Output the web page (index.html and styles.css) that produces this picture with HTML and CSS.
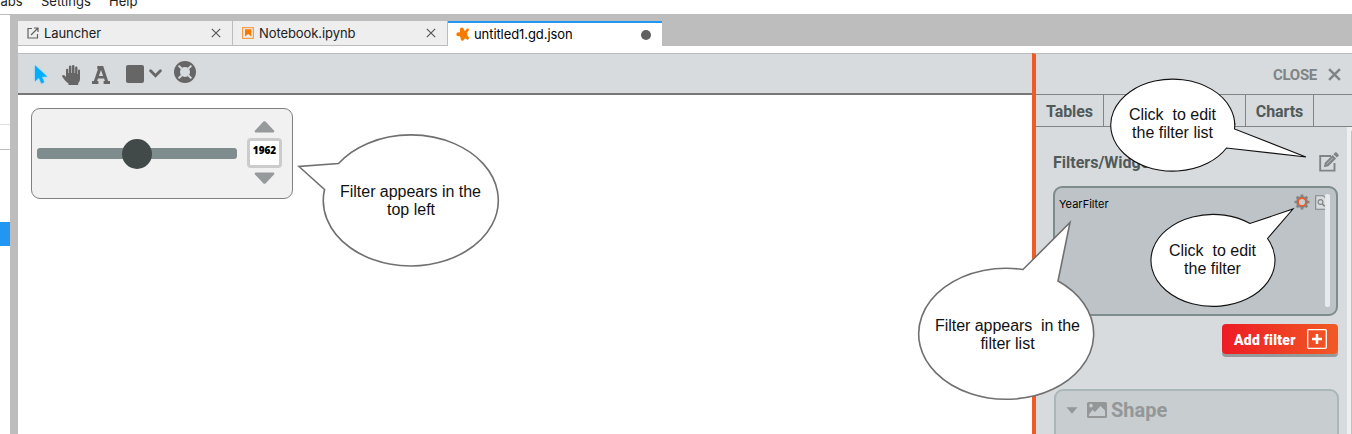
FILE: index.html
```html
<!DOCTYPE html>
<html lang="en">
<head>
<meta charset="utf-8">
<title>untitled1.gd.json</title>
<link rel="stylesheet" href="styles.css">
</head>
<body>
<div class="app">
  <nav class="menubar"><span class="menu-tabs">Tabs</span><span class="menu-settings">Settings</span><span>Help</span></nav>
  <div class="workspace">
    <aside class="rail"><div class="rail-a"></div><div class="rail-b"></div><div class="rail-c"></div><div class="rail-active"></div></aside>
    <main class="dock">
      <div class="doc-tabs">
        <div class="doc-tab">
          <svg class="doc-icon" viewBox="0 0 14 14"><path d="M6 2.500H2v9.500h9.500V8M8 2h4v4M12 2L5 9" fill="none" stroke="#616161" stroke-width="1.200"/></svg>
          <span class="doc-name">Launcher</span>
          <svg class="doc-close" viewBox="0 0 10 10"><path d="M.8.8l8.400 8.400M9.200.8L.8 9.200" stroke="#555" stroke-width="1.150"/></svg>
        </div>
        <div class="doc-tab">
          <svg class="doc-icon" viewBox="0 0 14 14"><rect x="1.600" y="1.600" width="10.800" height="10.800" fill="none" stroke="#f9a04a" stroke-width="1.200"/><path d="M4 3.300h6.400v7.200L7.200 8 4 10.500z" fill="#f57c00"/></svg>
          <span class="doc-name">Notebook.ipynb</span>
          <svg class="doc-close" viewBox="0 0 10 10"><path d="M.8.8l8.400 8.400M9.200.8L.8 9.200" stroke="#555" stroke-width="1.150"/></svg>
        </div>
        <div class="doc-tab current">
          <svg class="doc-icon" viewBox="0 0 14 14"><path d="M3.800 2.800Q4 .5 6 .5q1.800 0 2 2.300l.6 1q.8 0 1.600-1.300 1.200-1.500 2.300-.7 1.100 1-.2 2.400-1 .8-1 1.600V8q0 .8 1 1.500 1.500 1 .4 2.600-1.200 1.200-2.600-.1-.8-.8-1.400-.5L8 12.800q-.6 1.200-2 .9-1.700-.3-1.400-2.600L4 9.300H2.500Q.3 9.400.3 7.300q0-2 2.200-2H4z" fill="#f57c00"/></svg>
          <span class="doc-name">untitled1.gd.json</span>
          <span class="dirty"></span>
        </div>
      </div>
      <div class="editor">
        <section class="stage">
          <div class="toolbar">
            <svg class="tool-cursor" viewBox="0 0 16 22"><path d="M1 1v17.500l4.200-4 2.600 6.200 3.200-1.400-2.600-6h5.800z" fill="#00aeff"/></svg>
            <svg class="tool-hand" viewBox="0 0 18 20"><path d="M4 9V4.500a1.200 1.200 0 0 1 2.300 0V8h.6V1.800a1.250 1.250 0 0 1 2.500 0V8h.6V1.200a1.250 1.250 0 0 1 2.500 0V8h.6V2.800a1.200 1.200 0 0 1 2.400 0V9h.5V5.500a1 1 0 0 1 2 0V14c0 2-.8 3.300-1.800 4v2H6.500v-1.500C4.500 17.500 2 14 .4 12c-.8-1.600.9-2.600 2.300-1.400L4 12z" fill="#666"/></svg>
            <svg class="tool-text" viewBox="0 0 18 18"><path d="M5.300 0h5.900l4.900 15H18v3h-6.400v-3h1.300l-.8-2.500H6L5.100 15h1.300v3H0v-3h1.900L6 3H5.300zM9 4L6.900 10h4.200z" fill="#666" fill-rule="evenodd"/></svg>
            <span class="tool-square"></span>
            <svg class="tool-chevron" viewBox="0 0 12 8"><path d="M1.500 1.500L6 6l4.500-4.500" fill="none" stroke="#666" stroke-width="2.600" stroke-linecap="round"/></svg>
            <svg class="tool-help" viewBox="0 0 22 22"><circle cx="11" cy="11" r="8" fill="none" stroke="#666" stroke-width="6"/><path d="M4.600 4.600l3.200 3.200M17.400 4.600l-3.200 3.200M4.600 17.400l3.200-3.200M17.400 17.400l-3.200-3.200" stroke="#d7dbde" stroke-width="2"/></svg>
          </div>
          <div class="canvas">
            <div class="year-widget">
              <div class="slider"><span class="knob"></span></div>
              <div class="stepper">
                <svg class="step" viewBox="0 0 20 12"><path d="M9 .6q1-.8 2 0L19.500 9.500q1 2-1 2h-17q-2 0-1-2z" fill="#979a9a"/></svg>
                <div class="year">1962</div>
                <svg class="step down" viewBox="0 0 20 12"><path d="M9 .6q1-.8 2 0L19.500 9.500q1 2-1 2h-17q-2 0-1-2z" fill="#979a9a"/></svg>
              </div>
            </div>
          </div>
        </section>
        <section class="panel">
          <div class="panel-head"><span class="close-label">CLOSE</span><svg class="close-x" viewBox="0 0 12 12"><path d="M1 1l10 10M11 1L1 11" stroke="#808485" stroke-width="2.300"/></svg></div>
          <div class="panel-tabs"><div class="ptab tables"><span>Tables</span></div><div class="ptab selected"></div><div class="ptab charts"><span>Charts</span></div></div>
          <div class="panel-scroll">
            <div class="panel-body">
              <div class="section-head"><h2>Filters/Widgets</h2>
                <svg class="edit" viewBox="0 0 20 20"><path d="M12 4H1.200v14.600h14.300V11" fill="none" stroke="#808485" stroke-width="1.900"/><path d="M4.800 15.300l1-4.500L13.600 3l3.500 3.500-7.800 7.800zM14.400 2.200L16 .6q.8-.8 1.600 0l1.800 1.800q.8.800 0 1.600L17.900 5.600z" fill="#808485"/><path d="M7.500 12.300l6.300-6.300" stroke="#d7dbde" stroke-width=".6"/></svg>
              </div>
              <div class="filter-list">
                <span class="filter-name">YearFilter</span>
                <svg class="gear" viewBox="0 0 16 16"><g stroke="#808485" stroke-width="2.700"><path d="M8 .5v15M.5 8h15M2.700 2.700l10.600 10.600M13.300 2.700L2.700 13.300"/></g><circle cx="8" cy="8" r="5.900" fill="#808485"/><circle cx="8" cy="8" r="3.900" fill="#c9ced1" stroke="#f15a24" stroke-width="1.600"/></svg>
                <svg class="inspect" viewBox="0 0 12 15"><path d="M.7.700h7.500l3 3V14.300H.7z" fill="#d7dbde" stroke="#808485" stroke-width="1.100"/><circle cx="5.500" cy="7" r="2.400" fill="none" stroke="#808485" stroke-width="1.100"/><path d="M7.200 8.800l2.600 2.600" stroke="#808485" stroke-width="1.500"/></svg>
                <span class="list-scroll"></span>
              </div>
              <div class="actions"><div class="add-filter"><span>Add filter</span><svg viewBox="0 0 20 20"><rect x=".7" y=".7" width="18.600" height="18.600" rx="1" fill="none" stroke="#fff" stroke-width="1.300"/><path d="M10 5v10M5 10h10" stroke="#fff" stroke-width="2.500"/></svg></div></div>
              <div class="shape">
                <svg class="fold" viewBox="0 0 12 7"><path d="M.5.300h11L6 6.700z" fill="#939798"/></svg>
                <svg class="picture" viewBox="0 0 20 16"><path d="M1.500 0h17Q20 0 20 1.500v13q0 1.500-1.500 1.500h-17Q0 16 0 14.500v-13Q0 0 1.500 0zM2 12.500V14h16V8.500L13.500 4 8 10 5.500 8zM4 1.800a1.800 1.800 0 1 0 .01 0z" fill="#939798" fill-rule="evenodd"/></svg>
                <span>Shape</span>
              </div>
            </div>
            <div class="panel-bar"><i></i></div>
          </div>
        </section>
      </div>
    </main>
  </div>
  <svg class="callouts" viewBox="0 0 1352 434">
    <g fill="#fff" stroke="#707070" stroke-width="1.600">
      <path d="M338.500 163.500A87.500 65.500 0 1 1 324.500 189.500L299 166.500Z"/>
      <path d="M1058 281A87.500 65.500 0 1 1 1023 269.500L1070 222.500Z"/>
    </g>
    <g fill="#fff" stroke="#111" stroke-width="1.100">
      <path d="M1226.500 148A62 46 0 1 1 1234.500 129L1306 157Z"/>
      <path d="M1267.500 238.500A62 46 0 1 1 1250 223.500L1293 209Z"/>
    </g>
    <g class="callout-text">
      <text x="410.500" y="197" textLength="141">Filter appears in the</text><text x="411" y="215">top left</text>
      <text x="1007.500" y="331" textLength="145">Filter appears&#160; in the</text><text x="1007.500" y="349">filter list</text>
      <text x="1172.500" y="120">Click&#160; to edit</text><text x="1172.500" y="138">the filter list</text>
      <text x="1212.500" y="256">Click&#160; to edit</text><text x="1212.500" y="274">the filter</text>
    </g>
  </svg>
</div>
</body>
</html>
```
FILE: styles.css
```css
* { box-sizing: border-box; }
body { margin: 0; background: #fff; font-family: Inter, sans-serif; }
svg { display: block; flex: none; }
.app { position: relative; width: 1352px; height: 434px; overflow: hidden; display: flex; flex-direction: column; }
.menubar { height: 15px; flex: none; border-bottom: 1px solid #bdbdbd; display: flex; font-size: 13px; line-height: 16px; color: #212121; }
.menubar span { margin-top: -7px; white-space: nowrap; height: 16px; }
.menu-tabs { width: 48px; margin-left: -7px; }
.menu-settings { width: 68px; }
.workspace { flex: 1; display: flex; min-height: 0; }
.rail { width: 10px; flex: none; background: #fff; }
.rail-a { height: 110px; border-bottom: 1px solid #e0e0e0; }
.rail-b { height: 25px; border-bottom: 1px solid #bdbdbd; }
.rail-c { height: 72px; }
.rail-active { height: 24px; background: #2196f3; }
.dock { flex: 1; min-width: 0; padding: 6px 0 0 8px; background: #bdbdbd; display: flex; flex-direction: column; }
.doc-tabs { height: 25px; flex: none; display: flex; }
.doc-tab { width: 215px; height: 25px; display: flex; align-items: center; padding: 0 11px 0 8px; background: #eee; border-right: 1px solid #bdbdbd; border-bottom: 1px solid #bdbdbd; font-size: 13px; letter-spacing: -.08px; color: #212121; }
.doc-tab.current { width: 214px; padding-bottom: 2px; background: #fff; border-right: 0; border-bottom: 0; border-top: 2px solid #2196f3; color: #000; }
.doc-icon { width: 14px; height: 14px; margin-right: 4px; }
.doc-name { flex: 1; white-space: nowrap; }
.doc-close { width: 10px; height: 10px; }
.dirty { width: 10px; height: 10px; border-radius: 50%; background: #616161; margin-top: 2px; }
.editor { flex: 1; min-height: 0; display: flex; padding-top: 7px; background: #fff; }
.stage { width: 1014px; flex: none; display: flex; flex-direction: column; border-top: 1px solid #bdbdbd; }
.toolbar { height: 41px; flex: none; display: flex; align-items: center; padding-left: 16px; background: #d7dbde; border-bottom: 2px solid #777; }
.tool-cursor { width: 15px; height: 21px; margin-top: 2px; filter: drop-shadow(0 0 1px #7dcfff); }
.tool-hand { width: 18px; height: 20px; margin: 2px 0 0 13px; }
.tool-text { width: 18px; height: 18px; margin: 2px 0 0 12px; }
.tool-square { width: 18px; height: 18px; border-radius: 2px; margin-left: 16px; background: #666; }
.tool-chevron { width: 13px; height: 9px; margin-left: 5px; }
.tool-help { width: 22px; height: 22px; margin: -3px 0 0 12px; }
.canvas { flex: 1; padding: 13px; }
.year-widget { width: 262px; height: 91px; display: flex; align-items: center; padding: 0 10px 0 5px; background: #f1f1f1; border: 1px solid #808080; border-radius: 9px; }
.slider { width: 200px; height: 11px; border-radius: 3px; background: #7f8c8d; display: flex; align-items: center; justify-content: center; }
.knob { width: 30px; height: 30px; border-radius: 50%; background: #424949; flex: none; }
.stepper { width: 35px; margin-left: 10px; margin-top: -2px; display: flex; flex-direction: column; align-items: center; gap: 5px; }
.step { width: 21px; height: 12px; }
.down { transform: rotate(180deg); margin-top: -1px; }
.year { width: 35px; height: 30px; border: 3px solid #ccc; border-radius: 4px; background: #fff; text-align: center; font: 800 10px/19px "Open Sans", sans-serif; color: #000; }
.panel { flex: 1; display: flex; flex-direction: column; background: #d7dbde; border-left: 4px solid #f15a24; border-top: 1px solid #bdbdbd; font-family: Roboto, sans-serif; }
.panel-head { height: 41px; flex: none; border-bottom: 1px solid #808485; display: flex; align-items: center; justify-content: flex-end; padding-right: 12px; color: #808485; font-size: 15px; font-weight: 700; }
.close-x { width: 13px; height: 13px; margin-left: 11px; }
.close-label { margin-top: 2px; letter-spacing: -.3px; }
.panel-tabs { height: 32px; flex: none; border-bottom: 1px solid #808485; display: flex; color: #515a5a; font-size: 16px; font-weight: 700; }
.ptab { border-right: 1px solid #808485; display: flex; align-items: center; justify-content: center; padding-top: 2px; }
.tables { width: 68px; }
.tables span { letter-spacing: -.1px; }
.selected { width: 142px; }
.selected::after { content: ""; align-self: flex-end; width: 123px; height: 2px; margin-bottom: 1px; background: #f39c12; }
.charts { width: 68px; letter-spacing: -.1px; }
.panel-scroll { flex: 1; display: flex; min-height: 0; }
.panel-body { flex: 1; padding: 25px 8px 0 17px; display: flex; flex-direction: column; min-width: 0; }
.section-head { height: 34px; flex: none; display: flex; justify-content: space-between; color: #515a5a; }
.section-head h2 { margin: 0; font-size: 16px; line-height: 21px; font-weight: 700; }
.edit { width: 20px; height: 20px; }
.filter-list { height: 130px; flex: none; width: 285px; border: 2px solid #7f8c8c; border-radius: 9px; background: #bdc3c7; padding: 6px 6px 0 4px; display: flex; }
.filter-name { flex: 1; font: 400 11px/20px Inter, sans-serif; color: #000; }
.gear { width: 16px; height: 16px; }
.inspect { width: 12px; height: 15px; margin: 1px 0 0 5px; }
.list-scroll { width: 5px; height: 113px; margin-left: -2px; border-radius: 2px; background: #ecf0f1; opacity: .9; }
.actions { height: 73px; flex: none; padding-top: 8px; display: flex; justify-content: flex-end; width: 285px; }
.add-filter { width: 116px; height: 30px; display: flex; align-items: center; justify-content: space-between; padding: 0 11px 0 12px; border-radius: 4px; background: linear-gradient(90deg, #ed1c24, #f15a24); box-shadow: 0 3px #979a9a; color: #fff; font-size: 14px; font-weight: 900; letter-spacing: .25px; white-space: nowrap; }
.add-filter span { padding-top: 2px; }
.add-filter svg { width: 20px; height: 20px; }
.shape { width: 285px; height: 60px; margin-left: 1px; flex: none; border: 2px solid #aab7b8; border-radius: 9px; background: #c8cdd0; display: flex; align-items: flex-start; padding: 7px 10px; color: #939798; font-size: 20px; line-height: 24px; font-weight: 700; }
.fold { width: 12px; height: 7px; margin-top: 9px; }
.picture { width: 20px; height: 16px; margin: 4px 4px 0 9px; }
.panel-bar { width: 6px; flex: none; padding: 3px 0 0 4px; background: #efefef; }
.panel-bar i { display: block; height: 310px; background: #c1c1c1; border-radius: 3px 0 0; }
.callouts { position: absolute; inset: 0; width: 1352px; height: 434px; }
.callout-text { font: 16px "Liberation Sans", Arial, sans-serif; text-anchor: middle; fill: #111; }
```
